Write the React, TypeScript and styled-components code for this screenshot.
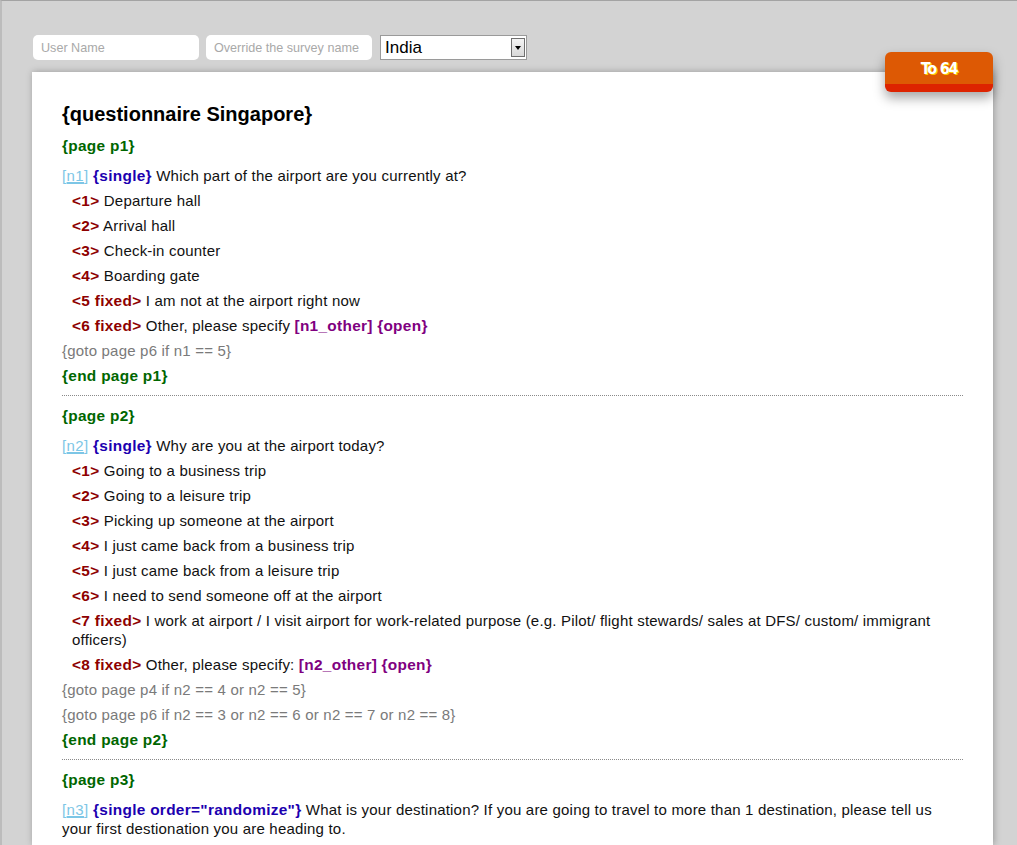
import React from "react";
import styled, { createGlobalStyle } from "styled-components";

const GlobalStyle = createGlobalStyle`
  html, body {
    margin: 0;
    padding: 0;
    background: #d3d3d3;
  }
  body {
    font-family: "Liberation Sans", Arial, sans-serif;
    border-top: 1px solid #a3a3a3;
    border-left: 2px solid #bcbcbc;
    min-height: 844px;
    box-sizing: border-box;
  }
`;

const Page = styled.div`
  padding: 34px 24px 0 30px;
  display: flex;
  flex-direction: column;
  gap: 12px;
  height: 844px;
  overflow: hidden;
  box-sizing: border-box;
`;

const Toolbar = styled.div`
  display: flex;
  align-items: center;
  gap: 7px;
  height: 25px;
  padding-left: 1px;
`;

const TextInput = styled.input`
  width: 166px;
  height: 25px;
  box-sizing: border-box;
  border: none;
  border-radius: 5px;
  background: #fff;
  padding: 0 8px;
  font-family: "Liberation Sans", Arial, sans-serif;
  font-size: 12.6px;
  color: #333;
  outline: none;
  &::placeholder {
    color: #a9a9a9;
  }
`;

const Select = styled.div`
  margin-left: 1px;
  width: 147px;
  height: 25px;
  box-sizing: border-box;
  border: 1px solid #9a9a9a;
  background: #fff;
  display: flex;
  align-items: center;
  justify-content: space-between;
  padding: 0 1px 0 4px;
  font-size: 17px;
  color: #000;
`;

const SelectArrow = styled.div`
  width: 14px;
  height: 19px;
  box-sizing: border-box;
  border: 1px solid #6f6f6f;
  background: linear-gradient(#f4f4f4, #d8d8d8);
  display: flex;
  align-items: center;
  justify-content: center;
  &::after {
    content: "";
    border-left: 3px solid transparent;
    border-right: 3px solid transparent;
    border-top: 4px solid #000;
  }
`;

const Card = styled.div`
  position: relative;
  background: #fff;
  width: 961px;
  flex: 1;
  box-sizing: border-box;
  padding: 30px 30px 0 30px;
  box-shadow: 1px 0 7px rgba(0, 0, 0, 0.28);
`;

const ToButton = styled.div`
  position: absolute;
  top: -20px;
  right: 0;
  width: 108px;
  height: 40px;
  box-sizing: border-box;
  background: #dd5904;
  border-bottom: 8px solid #dd2300;
  border-radius: 6px;
  box-shadow: 0 6px 12px rgba(0, 0, 0, 0.35);
  color: #fff;
  font-family: "DejaVu Sans Condensed", "Liberation Sans Narrow", sans-serif;
  font-weight: bold;
  font-size: 16px;
  letter-spacing: -1.2px;
  display: flex;
  align-items: center;
  justify-content: center;
  text-shadow: 1px 1px 0 #ffcc00;
`;

const Title = styled.h1`
  margin: 0 0 10px 0;
  font-size: 20px;
  line-height: 24px;
  font-weight: bold;
  color: #000;
`;

const Block = styled.div`
  display: flex;
  flex-direction: column;
  gap: 6px;
`;

const Line = styled.div<{ $indent?: boolean; $gap?: number }>`
  font-size: 15px;
  line-height: 19px;
  letter-spacing: 0.2px;
  color: #111;
  padding-left: ${(p) => (p.$indent ? "10px" : "0")};
  margin-top: ${(p) => p.$gap ?? 0}px;
`;

const Bold = styled.span`
  font-weight: bold;
  font-size: 15.4px;
  letter-spacing: 0.3px;
`;

const PageTag = styled(Bold)`
  color: #006600;
`;

const Ref = styled.span`
  color: #7cc6e6;
  text-decoration: underline;
  text-decoration-thickness: 2px;
  letter-spacing: 0.4px;
`;

const Kind = styled(Bold)`
  color: #1c00b0;
`;

const Code = styled(Bold)`
  color: #8e0000;
`;

const Open = styled(Bold)`
  color: #800080;
`;

const Goto = styled.div`
  font-size: 15px;
  line-height: 19px;
  letter-spacing: 0.2px;
  color: #7a7a7a;
`;

const Divider = styled.hr`
  border: none;
  border-top: 1px dotted #8a8a8a;
  margin: 10px 0 10px 0;
`;

type Option = { code: string; text: string; other?: string };

type Section = {
  page: string;
  ref: string;
  kind: string;
  question: string;
  options: Option[];
  gotos: string[];
  end?: boolean;
};

const sections: Section[] = [
  {
    page: "p1",
    ref: "n1",
    kind: "single",
    question: "Which part of the airport are you currently at?",
    options: [
      { code: "1", text: "Departure hall" },
      { code: "2", text: "Arrival hall" },
      { code: "3", text: "Check-in counter" },
      { code: "4", text: "Boarding gate" },
      { code: "5 fixed", text: "I am not at the airport right now" },
      { code: "6 fixed", text: "Other, please specify", other: "n1_other" },
    ],
    gotos: ["{goto page p6 if n1 == 5}"],
    end: true,
  },
  {
    page: "p2",
    ref: "n2",
    kind: "single",
    question: "Why are you at the airport today?",
    options: [
      { code: "1", text: "Going to a business trip" },
      { code: "2", text: "Going to a leisure trip" },
      { code: "3", text: "Picking up someone at the airport" },
      { code: "4", text: "I just came back from a business trip" },
      { code: "5", text: "I just came back from a leisure trip" },
      { code: "6", text: "I need to send someone off at the airport" },
      {
        code: "7 fixed",
        text: "I work at airport / I visit airport for work-related purpose (e.g. Pilot/ flight stewards/ sales at DFS/ custom/ immigrant officers)",
      },
      { code: "8 fixed", text: "Other, please specify:", other: "n2_other" },
    ],
    gotos: [
      "{goto page p4 if n2 == 4 or n2 == 5}",
      "{goto page p6 if n2 == 3 or n2 == 6 or n2 == 7 or n2 == 8}",
    ],
    end: true,
  },
  {
    page: "p3",
    ref: "n3",
    kind: 'single order="randomize"',
    question:
      "What is your destination? If you are going to travel to more than 1 destination, please tell us your first destionation you are heading to.",
    options: [],
    gotos: [],
  },
];

function SectionBlock({ s }: { s: Section }) {
  return (
    <Block>
      <Line>
        <PageTag>{`{page ${s.page}}`}</PageTag>
      </Line>
      <Line $gap={5}>
        <Ref>[{s.ref}]</Ref> <Kind>{`{${s.kind}}`}</Kind> {s.question}
      </Line>
      {s.options.map((o) => (
        <Line $indent key={o.code}>
          <Code>{`<${o.code}>`}</Code> {o.text}
          {o.other && (
            <>
              {" "}
              <Open>[{o.other}]</Open> <Open>{"{open}"}</Open>
            </>
          )}
        </Line>
      ))}
      {s.gotos.map((g) => (
        <Goto key={g}>{g}</Goto>
      ))}
      {s.end && (
        <Line>
          <PageTag>{`{end page ${s.page}}`}</PageTag>
        </Line>
      )}
    </Block>
  );
}

export default function App() {
  return (
    <>
      <GlobalStyle />
      <Page>
        <Toolbar>
          <TextInput placeholder="User Name" />
          <TextInput placeholder="Override the survey name" />
          <Select>
            India
            <SelectArrow />
          </Select>
        </Toolbar>
        <Card>
          <ToButton>To 64</ToButton>
          <Title>{"{questionnaire Singapore}"}</Title>
          {sections.map((s, i) => (
            <React.Fragment key={s.page}>
              {i > 0 && <Divider />}
              <SectionBlock s={s} />
            </React.Fragment>
          ))}
        </Card>
      </Page>
    </>
  );
}
